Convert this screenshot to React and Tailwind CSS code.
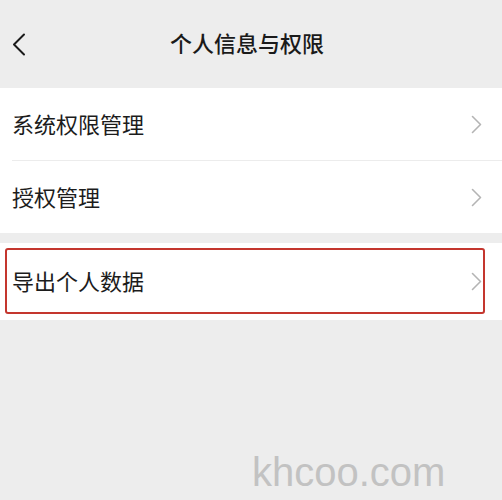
import React from "react";

const Chevron = ({ className = "" }) => (
  <svg width="11" height="19" viewBox="0 0 11 19" className={className} fill="none">
    <path d="M1.5 1.5 L9.5 9.5 L1.5 17.5" stroke="#b4b4b4" strokeWidth="1.6" strokeLinecap="round" strokeLinejoin="round" />
  </svg>
);

const Row = ({ label }) => (
  <div className="h-[72px] flex items-center justify-between pl-[12px] pr-[20px]">
    <span className="text-[22px] text-[#1c1c1c] leading-none pb-[3px]">{label}</span>
    <Chevron />
  </div>
);

export default function App() {
  return (
    <div
      className="w-[502px] h-[500px] bg-[#ededed] flex flex-col overflow-hidden"
      style={{ fontFamily: '"Noto Sans CJK SC", "Noto Sans", sans-serif' }}
    >
      <div className="h-[88px] grid grid-cols-[48px_1fr_48px] items-center">
        <div className="pl-[12px] pt-[1px]">
          <svg width="14" height="23" viewBox="0 0 14 23" fill="none">
            <path d="M12 1.5 L2 11.5 L12 21.5" stroke="#1a1a1a" strokeWidth="2" strokeLinecap="round" strokeLinejoin="round" />
          </svg>
        </div>
        <div className="text-center text-[22px] font-medium text-[#1a1a1a] leading-none pr-[8px] pb-[4px]">
          个人信息与权限
        </div>
        <div />
      </div>
      <div className="bg-white">
        <Row label="系统权限管理" />
        <div className="ml-[12px] h-px bg-[#ececec]" />
        <Row label="授权管理" />
      </div>
      <div className="h-[10px]" />
      <div className="bg-white pt-[5px] pb-[6px] pl-[5px] pr-[17px]">
        <div className="h-[66px] border-2 border-[#c4362e] rounded-[3px] flex items-center justify-between pl-[5px] pr-[1px]">
          <span className="text-[22px] text-[#1c1c1c] leading-none pb-[3px]">导出个人数据</span>
          <Chevron />
        </div>
      </div>
      <div className="flex-1 flex items-end pl-[252px] pb-[8px]">
        <span
          className="text-[40px] text-[#c2c2c2] leading-none"
          style={{ fontFamily: '"Liberation Sans", Arial, sans-serif' }}
        >
          khcoo.com
        </span>
      </div>
    </div>
  );
}
